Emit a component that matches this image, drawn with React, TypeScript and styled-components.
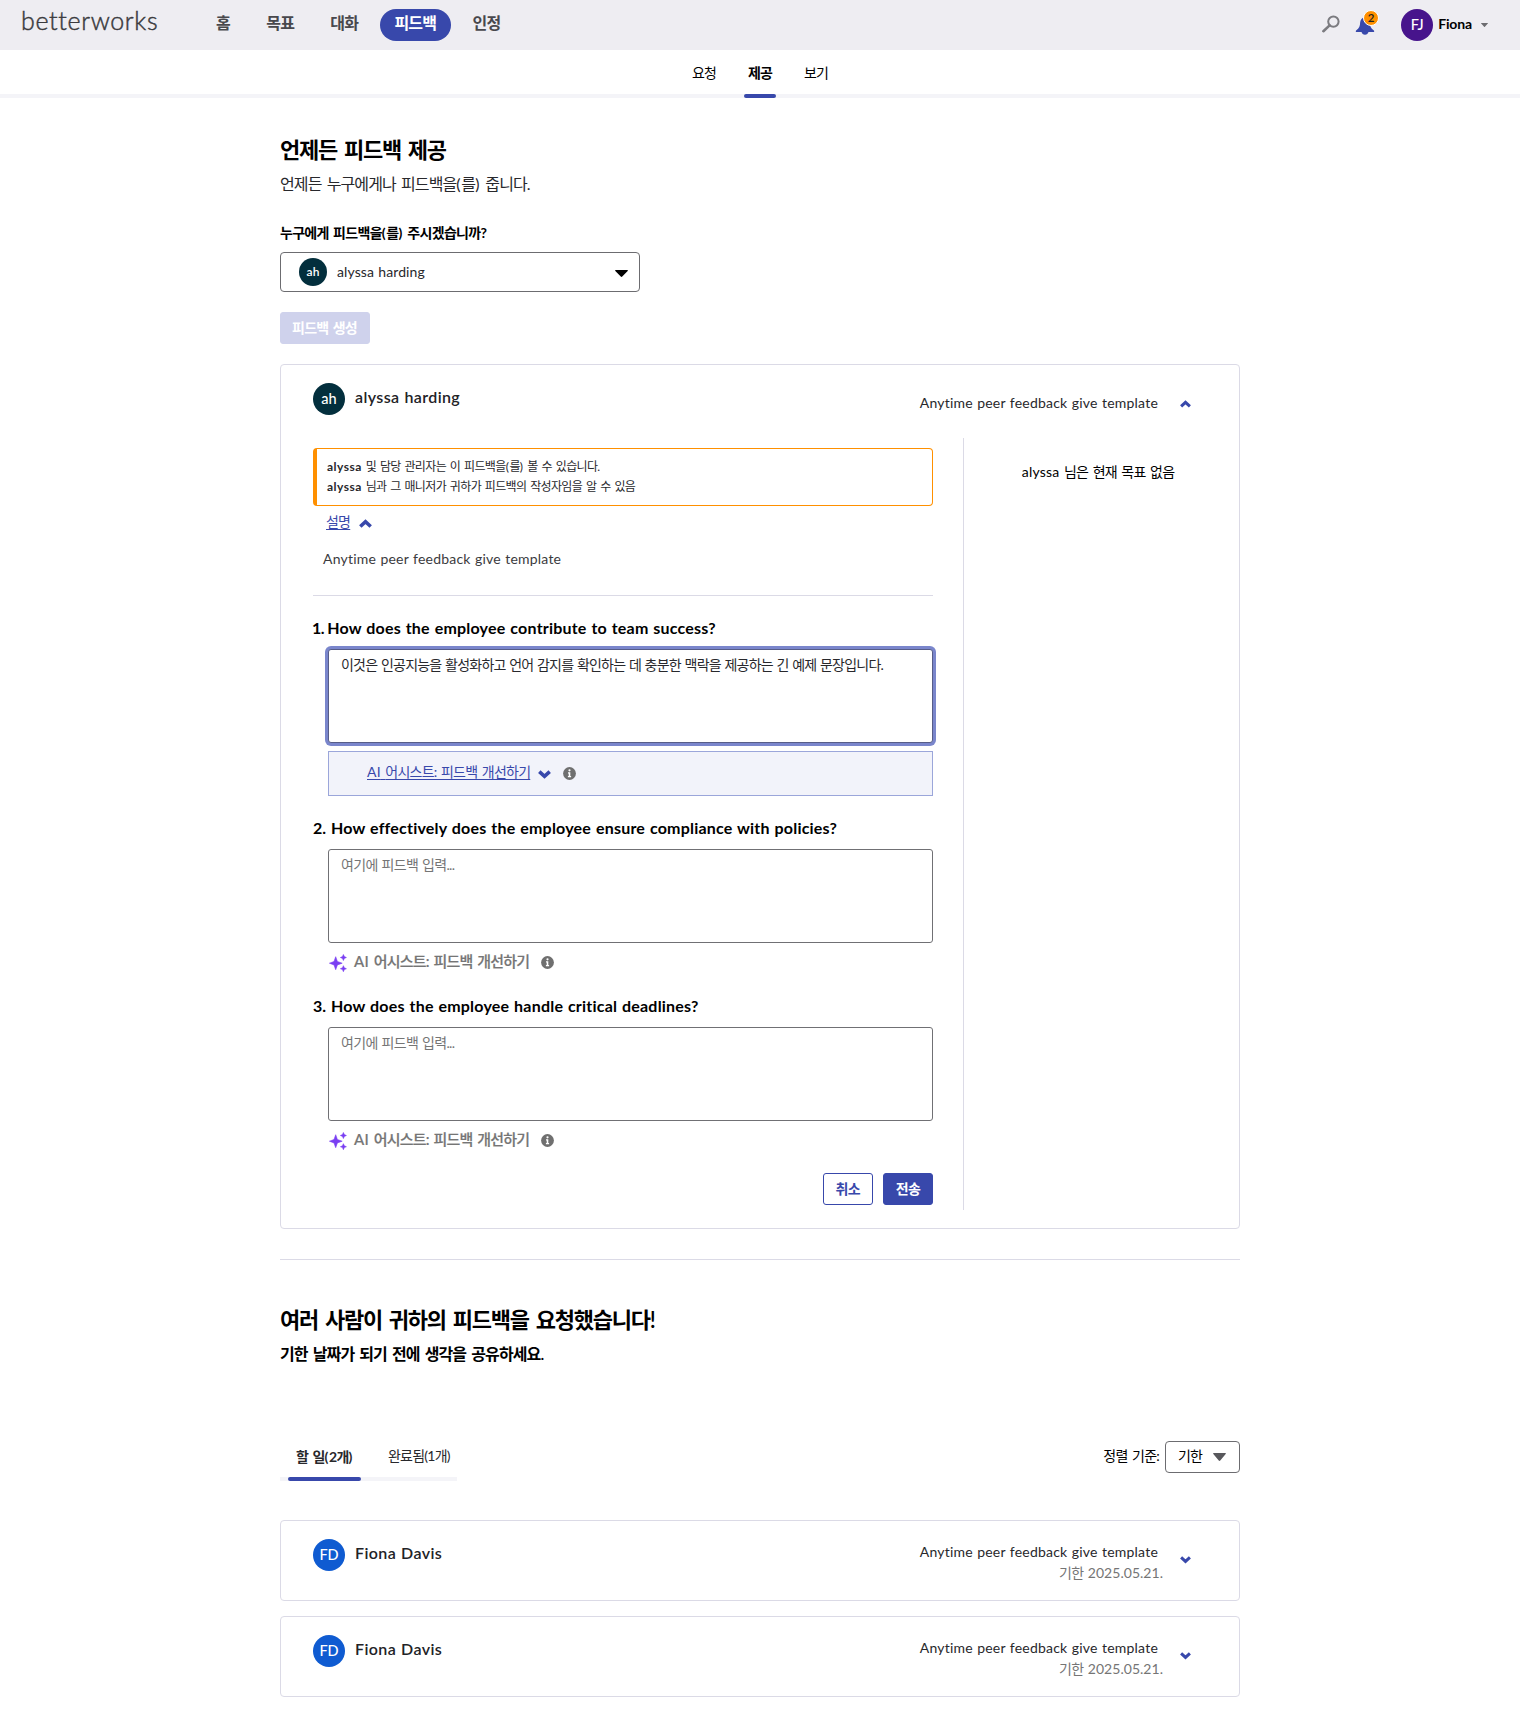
import React from 'react';
import styled, { createGlobalStyle, css } from 'styled-components';

const color = {
  brand: '#3848ab',
  ink: '#000',
  text: '#28282c',
  muted: '#757575',
  line: '#dbdae6',
  track: '#f4f4f8',
  orange: '#ff9000',
};

const GlobalStyle = createGlobalStyle`
  *, *::before, *::after { box-sizing: border-box; }
  body {
    margin: 0;
    background: #fff;
    color: ${color.ink};
    font-family: Lato, "Noto Sans CJK KR", sans-serif;
    font-size: 14px;
    line-height: 20px;
  }
  h2, p, ul { margin: 0; padding: 0; font-weight: inherit; }
  button, textarea { font: inherit; letter-spacing: inherit; word-spacing: inherit; }
`;

const hangul = css`
  letter-spacing: -0.055em;
  word-spacing: 0.12em;
`;

const latin = css`
  letter-spacing: 0.015em;
  word-spacing: 0.04em;
`;

const Page = styled.div`
  min-height: 1727px;
  white-space: nowrap;
  ${hangul}
`;

const Latin = styled.span`
  ${latin}
`;

const Paren = styled.span`
  letter-spacing: 0.045em;
`;

/* ---------- top bar ---------- */

const TopBar = styled.header`
  display: flex;
  align-items: flex-start;
  height: 50px;
  padding: 0 32px 0 21px;
  background: #eeedf2;
`;

const Logo = styled.div`
  width: 180.5px;
  padding-top: 4px;
  color: #3a3a3e;
  font-size: 25px;
  font-weight: 300;
  line-height: 32px;
  letter-spacing: 0.026em;
  -webkit-text-stroke: 0.45px #3a3a3e;
`;

const MainNav = styled.nav`
  display: flex;
  gap: 7px;
  padding-top: 9px;
`;

const NavItem = styled.a<{ $active?: boolean }>`
  height: 32px;
  padding: 0 14.6px;
  border-radius: 16px;
  background: ${(p) => (p.$active ? color.brand : 'transparent')};
  color: ${(p) => (p.$active ? '#fff' : '#48484d')};
  font-size: 16px;
  font-weight: ${(p) => (p.$active ? 700 : 600)};
  line-height: 28px;
`;

const UserArea = styled.div`
  display: flex;
  align-items: center;
  height: 50px;
  margin-left: auto;
  > svg:first-child { margin-bottom: 2px; }
`;

const BellWrap = styled.div`
  position: relative;
  width: 20px;
  height: 20px;
  margin: 2px 26px 0 15px;
`;

const Badge = styled.span`
  position: absolute;
  top: -6px;
  left: 8px;
  width: 16px;
  height: 16px;
  border: 1px solid #fff;
  border-radius: 50%;
  background: ${color.orange};
  color: #222;
  font-size: 11.5px;
  font-weight: 600;
  line-height: 14px;
  letter-spacing: 0;
  text-align: center;
`;

const Avatar = styled.span<{ $bg: string; $size?: number }>`
  flex: none;
  width: ${(p) => p.$size ?? 32}px;
  height: ${(p) => p.$size ?? 32}px;
  border-radius: 50%;
  background: ${(p) => p.$bg};
  color: #fff;
  font-size: ${(p) => (p.$size ? 12 : 14.5)}px;
  font-weight: ${(p) => (p.$size ? 600 : 500)};
  line-height: ${(p) => p.$size ?? 32}px;
  letter-spacing: 0;
  text-align: center;
`;

const UserName = styled.span`
  margin: 0 9px 3px 5px;
  font-weight: 700;
  letter-spacing: -0.01em;
`;

/* ---------- sub navigation ---------- */

const SubNav = styled.nav`
  display: flex;
  justify-content: center;
  gap: 24px;
  height: 48px;
  border-bottom: 4px solid ${color.track};
`;

const SubTab = styled.a<{ $active?: boolean }>`
  width: 32px;
  height: 48px;
  padding-top: 12px;
  line-height: 21px;
  text-align: center;
  font-weight: ${(p) => (p.$active ? 700 : 400)};
  &::after {
    content: '';
    display: ${(p) => (p.$active ? 'block' : 'none')};
    height: 4px;
    margin-top: 11px;
    border-radius: 2px;
    background: ${color.brand};
  }
`;

/* ---------- main column ---------- */

const Main = styled.main`
  width: 960px;
  margin: 0 auto;
  padding-top: 36px;
`;

const Title = styled.h2`
  font-size: 22px;
  font-weight: 600;
  line-height: 32px;
  letter-spacing: -0.056em;
  word-spacing: 0.12em;
`;

const Lead = styled.p<{ $strong?: boolean }>`
  padding-top: 6px;
  color: ${(p) => (p.$strong ? color.ink : color.text)};
  font-size: 16px;
  font-weight: ${(p) => (p.$strong ? 600 : 400)};
  line-height: 24px;
  ${hangul}
`;

const FieldLabel = styled.div`
  padding-top: 27px;
  font-weight: 700;
  letter-spacing: -0.05em;
`;

const PersonSelect = styled.div`
  display: flex;
  align-items: center;
  width: 360px;
  height: 40px;
  margin-top: 9px;
  padding: 0 11px 0 18px;
  border: 1px solid #6c6c70;
  border-radius: 4px;
  color: ${color.text};
  svg { margin-top: 2px; }
`;

const PersonName = styled.span`
  flex: 1;
  padding-left: 10px;
  word-spacing: 0.03em;
  letter-spacing: 0.008em;
`;

const Button = styled.button<{ $kind: 'primary' | 'outline' | 'disabled' }>`
  height: 32px;
  padding: 0 12px 1px;
  border: 1px solid ${(p) => (p.$kind === 'disabled' ? '#cfd2ec' : color.brand)};
  border-radius: 3px;
  background: ${(p) =>
    p.$kind === 'primary' ? color.brand : p.$kind === 'disabled' ? '#cfd2ec' : '#fff'};
  color: ${(p) => (p.$kind === 'outline' ? color.brand : '#fff')};
  font-weight: 700;
  line-height: 28px;
`;

const CreateButton = styled(Button)`
  display: block;
  width: 90px;
  margin: 20px 0;
  padding-left: 11px;
`;

const Card = styled.section`
  border: 1px solid ${color.line};
  border-radius: 4px;
`;

const CardHead = styled.div<{ $height: number }>`
  display: flex;
  align-items: flex-start;
  height: ${(p) => p.$height}px;
  padding: 18px 48px 0 32px;
`;

const CardName = styled.span`
  flex: 1;
  padding: 4px 0 0 10px;
  color: #222226;
  font-size: 16px;
  font-weight: 600;
  letter-spacing: 0.024em;
  word-spacing: 0.04em;
`;

const TemplateInfo = styled.div<{ $top: number }>`
  padding-top: ${(p) => p.$top}px;
  color: ${color.text};
  text-align: right;
`;

const TemplateName = styled.div`
  padding-right: 5px;
  ${latin}
`;

const DueDate = styled.div`
  padding-top: 1px;
  color: ${color.muted};
`;

const DateText = styled.span`
  letter-spacing: 0.002em;
`;

const HeadChevron = styled.span<{ $top: number }>`
  display: flex;
  margin: ${(p) => p.$top}px 0 0 17px;
`;

const CardBody = styled.div`
  display: grid;
  grid-template-columns: 682px 1fr;
  height: 772px;
  margin-bottom: 18px;
`;

const Form = styled.div`
  padding: 10px 0 0 32px;
`;

const Side = styled.aside`
  padding: 24px 7px 0 0;
  border-left: 1px solid ${color.line};
  text-align: center;
`;

const Notice = styled.div`
  height: 58px;
  padding: 8px 10px;
  border: 1px solid ${color.orange};
  border-left-width: 4px;
  border-radius: 4px;
  color: ${color.text};
  font-size: 12px;
  line-height: 20px;
  ${hangul}
  b {
    letter-spacing: 0.04em;
    font-weight: 700;
  }
`;

const FormInner = styled.div`
  width: 620px;
`;

const Toggle = styled.div`
  display: flex;
  align-items: center;
  gap: 9px;
  height: 20px;
  margin: 6px 0 0 13px;
  svg { margin-top: 3px; }
`;

const Link = styled.a`
  color: ${color.brand};
  text-decoration: underline;
  text-underline-offset: 2px;
`;

const Description = styled.div`
  height: 47px;
  margin-top: 17px;
  padding-left: 10px;
  color: #3b3b40;
  border-bottom: 1px solid ${color.line};
  ${latin}
`;

const Question = styled.div<{ $top: number }>`
  padding-top: ${(p) => p.$top}px;
  margin-bottom: 11px;
  font-size: 16px;
  font-weight: 700;
  line-height: 20px;
  letter-spacing: 0.013em;
  word-spacing: 0.045em;
`;

const Number = styled.span<{ $narrow?: boolean }>`
  margin: ${(p) => (p.$narrow ? '0 -1.5px 0 -1px' : '0')};
  letter-spacing: ${(p) => (p.$narrow ? '-0.04em' : '0')};
`;

const Answer = styled.textarea<{ $focused?: boolean }>`
  display: block;
  width: 605px;
  height: 94px;
  margin-left: 15px;
  padding: 5px 12px;
  border: 1px solid ${(p) => (p.$focused ? '#575d88' : '#707074')};
  border-radius: 3px;
  outline: none;
  box-shadow: ${(p) => (p.$focused ? '0 0 0 3px #7a86cc' : 'none')};
  color: ${color.text};
  line-height: 20px;
  word-spacing: 0.055em;
  resize: none;
  &::placeholder {
    color: ${color.muted};
    letter-spacing: -0.045em;
    opacity: 1;
  }
`;

const AssistPanel = styled.div`
  display: flex;
  align-items: center;
  width: 605px;
  height: 45px;
  margin: 8px 0 0 15px;
  padding: 0 0 3px 38px;
  border: 1px solid #9ba6da;
  background: #f2f3fa;
  svg { margin-top: 5px; }
  svg:last-child { margin-top: 3px; }
`;

const AssistRow = styled.div`
  display: flex;
  align-items: center;
  height: 20px;
  margin: 8px 0 0 16px;
  color: ${color.muted};
  font-size: 15px;
  font-weight: 500;
  svg:first-child { margin-top: 3px; }
  svg:last-child { margin-top: 2px; }
`;

const AssistLabel = styled.span`
  -webkit-text-stroke: 0.2px ${color.muted};
`;

const Gap = styled.span<{ $w: number }>`
  width: ${(p) => p.$w}px;
`;

const Actions = styled.div`
  display: flex;
  justify-content: flex-end;
  gap: 10px;
  margin-top: 24px;
`;

const Separator = styled.hr`
  height: 1px;
  margin: 30px 0 44px;
  border: 0;
  background: ${color.line};
`;

/* ---------- requests ---------- */

const ListBar = styled.div`
  display: flex;
  justify-content: space-between;
  align-items: flex-start;
  height: 79px;
  margin-top: 75px;
`;

const Tabs = styled.div`
  display: flex;
  width: 177px;
  height: 40px;
  padding-left: 8px;
  background: linear-gradient(${color.track}, ${color.track}) left bottom / 100% 4px no-repeat;
`;

const Tab = styled.a<{ $active?: boolean }>`
  width: ${(p) => (p.$active ? 73 : 96)}px;
  padding: ${(p) => (p.$active ? '6px 0 0 8px' : '5px 0 0 27px')};
  color: ${color.text};
  font-weight: ${(p) => (p.$active ? 700 : 400)};
  &::after {
    content: '';
    display: ${(p) => (p.$active ? 'block' : 'none')};
    height: 4px;
    margin: 10px 0 0 -8px;
    border-radius: 2px;
    background: ${color.brand};
  }
`;

const Sort = styled.div`
  display: flex;
  align-items: center;
  gap: 6px;
  height: 32px;
  > span { padding-bottom: 3px; }
`;

const SortSelect = styled.div`
  display: flex;
  align-items: center;
  justify-content: space-between;
  width: 75px;
  height: 32px;
  padding: 0 13px 0 12px;
  border: 1px solid #6c6c70;
  border-radius: 4px;
  span { padding-bottom: 3px; }
`;

const RequestList = styled.div`
  display: grid;
  gap: 15px;
`;

/* ---------- drawings ---------- */

const SearchIcon = () => (
  <svg width="18" height="18" viewBox="0 0 18 18" fill="none" stroke="#7b7b80" strokeWidth="2">
    <circle cx="11.4" cy="6.6" r="5.2" />
    <path d="M7.6 10.4 1.4 16.2" strokeWidth="2.6" strokeLinecap="round" />
  </svg>
);

const BellIcon = () => (
  <svg width="20" height="20" viewBox="0 0 20 20" fill={color.brand}>
    <path d="M10 1.2c-3 .3-4.7 2.6-4.9 5.6-.2 3.3-.7 5.4-4 7.6-.6.5-.4 1.7.5 1.7H6.5c.5 1.7 1.600 2.600 3.500 2.600s3-.9 3.500-2.600h4.900c.9 0 1.100-1.200.5-1.700-3.300-2.200-3.800-4.300-4-7.600C14.700 3.800 13 1.500 10 1.200Z" />
  </svg>
);

const Caret = ({ w, h, fill }: { w: number; h: number; fill: string }) => (
  <svg width={w} height={h} viewBox="0 0 12 7" preserveAspectRatio="none" fill={fill}>
    <path d="M.6 0h10.800c.5 0 .7.500.3.900L6.700 6.600c-.4.500-1 .5-1.400 0L.3.900C-.1.500.1 0 .6 0Z" />
  </svg>
);

const Chevron = ({ up, size = 11 }: { up?: boolean; size?: number }) => (
  <svg
    width={size}
    height={size * 0.7}
    viewBox="0 0 12 8.4"
    fill="none"
    stroke={color.brand}
    strokeWidth="3.3"
  >
    <path d={up ? 'M1.2 6.9 6 2.5l4.8 4.4' : 'M1.2 1.5 6 5.9l4.8-4.4'} />
  </svg>
);

const InfoIcon = () => (
  <svg width="13" height="13" viewBox="0 0 13 13">
    <circle cx="6.5" cy="6.5" r="6.4" fill="#6f6f6f" />
    <circle cx="6.5" cy="3.3" r="1.1" fill="#fff" />
    <path d="M5 5.300h2.300v3.700h.8v1.200H4.900V9h.8V6.500H5Z" fill="#fff" />
  </svg>
);

const SparkleIcon = () => (
  <svg
    width="18"
    height="18"
    viewBox="0 0 18 18"
    fill="#7a3ff2"
    stroke="#7a3ff2"
    strokeWidth="0.6"
    strokeLinejoin="round"
  >
    <path d="M6.700 2.700 8.400 7.500 13.200 9.200 8.400 10.900 6.700 15.700 5 10.900.4 9.200 5 7.500Z" />
    <path d="m14.400.5.9 2.100 2.100.9-2.100.9-.9 2.100-.9-2.100-2.100-.9 2.100-.9Z" />
    <path d="m14.400 11.700.9 2.100 2.100.9-2.100.9-.9 2.100-.9-2.100-2.100-.9 2.100-.9Z" />
  </svg>
);

/* ---------- composition ---------- */

const ASSIST = '어시스트: 피드백 개선하기';
const TEMPLATE = 'Anytime peer feedback give template';

const Particle = () => (
  <>
    <Paren>(</Paren>를<Paren>)</Paren>
  </>
);

const Assist = () => (
  <AssistRow>
    <SparkleIcon />
    <Gap $w={7} />
    <AssistLabel>
      <Latin>AI</Latin> {ASSIST}
    </AssistLabel>
    <Gap $w={12} />
    <InfoIcon />
  </AssistRow>
);

const RequestCard = () => (
  <Card>
    <CardHead $height={79}>
      <Avatar $bg="#0f5bd1">FD</Avatar>
      <CardName>Fiona Davis</CardName>
      <TemplateInfo $top={3}>
        <TemplateName>{TEMPLATE}</TemplateName>
        <DueDate>
          기한 <DateText>2025.05.21.</DateText>
        </DueDate>
      </TemplateInfo>
      <HeadChevron $top={17}>
        <Chevron />
      </HeadChevron>
    </CardHead>
  </Card>
);

export default function App() {
  return (
    <Page>
      <GlobalStyle />
      <TopBar>
        <Logo>betterworks</Logo>
        <MainNav>
          <NavItem>홈</NavItem>
          <NavItem>목표</NavItem>
          <NavItem>대화</NavItem>
          <NavItem $active>피드백</NavItem>
          <NavItem>인정</NavItem>
        </MainNav>
        <UserArea>
          <SearchIcon />
          <BellWrap>
            <BellIcon />
            <Badge>2</Badge>
          </BellWrap>
          <Avatar $bg="#47148c">FJ</Avatar>
          <UserName>Fiona</UserName>
          <Caret w={7} h={4} fill="#6c6c70" />
        </UserArea>
      </TopBar>
      <SubNav>
        <SubTab>요청</SubTab>
        <SubTab $active>제공</SubTab>
        <SubTab>보기</SubTab>
      </SubNav>

      <Main>
        <Title>언제든 피드백 제공</Title>
        <Lead>
          언제든 누구에게나 피드백을
          <Particle /> 줍니다.
        </Lead>

        <FieldLabel>
          누구에게 피드백을
          <Particle /> 주시겠습니까?
        </FieldLabel>
        <PersonSelect>
          <Avatar $bg="#032f3d" $size={28}>ah</Avatar>
          <PersonName>alyssa harding</PersonName>
          <Caret w={13} h={7} fill="#000" />
        </PersonSelect>
        <CreateButton $kind="disabled">피드백 생성</CreateButton>

        <Card>
          <CardHead $height={73}>
            <Avatar $bg="#032f3d">ah</Avatar>
            <CardName>alyssa harding</CardName>
            <TemplateInfo $top={10}>
              <TemplateName>{TEMPLATE}</TemplateName>
            </TemplateInfo>
            <HeadChevron $top={17}>
              <Chevron up />
            </HeadChevron>
          </CardHead>
          <CardBody>
            <Form>
              <FormInner>
                <Notice>
                  <div>
                    <b>alyssa</b> 및 담당 관리자는 이 피드백을
                    <Particle /> 볼 수 있습니다.
                  </div>
                  <div>
                    <b>alyssa</b> 님과 그 매니저가 귀하가 피드백의 작성자임을 알 수 있음
                  </div>
                </Notice>
                <Toggle>
                  <Link>설명</Link>
                  <Chevron up size={13} />
                </Toggle>
                <Description>{TEMPLATE}</Description>

                <Question $top={22}>
                  <Number $narrow>1.</Number> How does the employee contribute to team success?
                </Question>
                <Answer
                  $focused
                  readOnly
                  defaultValue="이것은 인공지능을 활성화하고 언어 감지를 확인하는 데 충분한 맥락을 제공하는 긴 예제 문장입니다."
                />
                <AssistPanel>
                  <Link>
                    <Latin>AI</Latin> {ASSIST}
                  </Link>
                  <Gap $w={8} />
                  <Chevron size={13} />
                  <Gap $w={12} />
                  <InfoIcon />
                </AssistPanel>

                <Question $top={22}>
                  <Number>2.</Number> How effectively does the employee ensure compliance with
                  policies?
                </Question>
                <Answer placeholder="여기에 피드백 입력..." />
                <Assist />

                <Question $top={25}>
                  <Number>3.</Number> How does the employee handle critical deadlines?
                </Question>
                <Answer placeholder="여기에 피드백 입력..." />
                <Assist />

                <Actions>
                  <Button $kind="outline">취소</Button>
                  <Button $kind="primary">전송</Button>
                </Actions>
              </FormInner>
            </Form>
            <Side>
              <Latin>alyssa</Latin> 님은 현재 목표 없음
            </Side>
          </CardBody>
        </Card>

        <Separator />

        <Title>여러 사람이 귀하의 피드백을 요청했습니다!</Title>
        <Lead $strong>기한 날짜가 되기 전에 생각을 공유하세요.</Lead>

        <ListBar>
          <Tabs>
            <Tab $active>
              할 일<Paren>(</Paren>2개)
            </Tab>
            <Tab>완료됨(1개)</Tab>
          </Tabs>
          <Sort>
            <span>정렬 기준:</span>
            <SortSelect>
              <span>기한</span>
              <Caret w={13} h={8} fill="#58585c" />
            </SortSelect>
          </Sort>
        </ListBar>

        <RequestList>
          <RequestCard />
          <RequestCard />
        </RequestList>
      </Main>
    </Page>
  );
}
